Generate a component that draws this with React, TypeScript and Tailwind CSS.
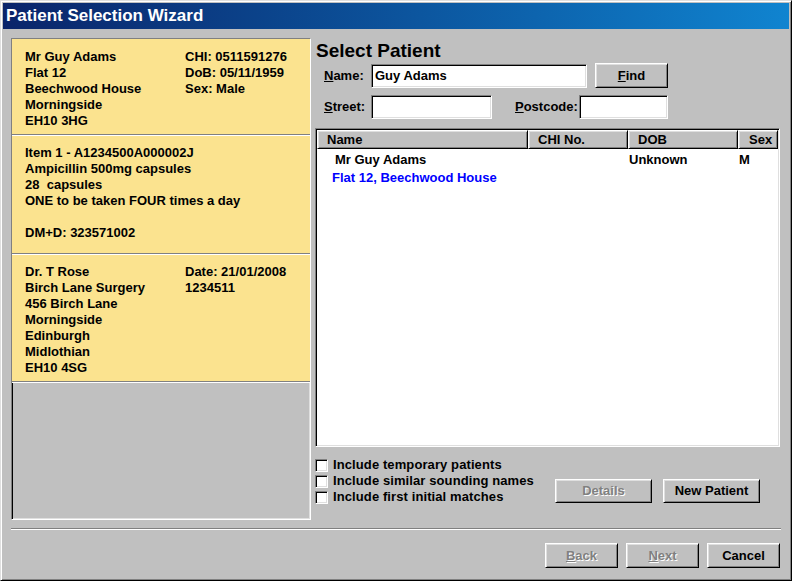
import React from 'react';

// Windows-classic bevel styles
const raised =
  'bg-[#c0c0c0] border border-t-white border-l-white border-r-black border-b-black shadow-[inset_1px_1px_0_#dfdfdf,inset_-1px_-1px_0_#808080]';
const sunken =
  'border border-t-[#808080] border-l-[#808080] border-r-white border-b-white shadow-[inset_1px_1px_0_#000,inset_-1px_-1px_0_#dfdfdf]';

function Btn({ children, className = '', disabled = false }: { children: React.ReactNode; className?: string; disabled?: boolean }) {
  return (
    <div
      className={`${raised} flex items-center justify-center text-[13px] font-bold ${
        disabled ? 'text-[#808080] [text-shadow:1px_1px_0_#fff]' : 'text-black'
      } ${className}`}
    >
      {children}
    </div>
  );
}

function Field({ value = '', className = '' }: { value?: string; className?: string }) {
  return (
    <div className={`${sunken} bg-white flex items-center pl-[3px] text-[13px] font-bold text-black ${className}`}>
      {value}
    </div>
  );
}

function Check({ label }: { label: string }) {
  return (
    <div className="flex items-center h-[16px] gap-[5px]">
      <div className={`${sunken} bg-white w-[13px] h-[13px]`} />
      <span className="text-[13px] font-bold text-black leading-[16px] tracking-[0.1px]">{label}</span>
    </div>
  );
}

function Divider() {
  return (
    <>
      <div className="h-px bg-[#808080]" />
      <div className="h-px bg-white" />
    </>
  );
}

const PATIENT = [
  ['Mr Guy Adams', 'CHI: 0511591276'],
  ['Flat 12', 'DoB: 05/11/1959'],
  ['Beechwood House', 'Sex: Male'],
  ['Morningside', ''],
  ['EH10 3HG', ''],
];

const ITEM = [
  'Item 1 - A1234500A000002J',
  'Ampicillin 500mg capsules',
  '28  capsules',
  'ONE to be taken FOUR times a day',
  '',
  'DM+D: 323571002',
];

const DOCTOR = [
  ['Dr. T Rose', 'Date: 21/01/2008'],
  ['Birch Lane Surgery', '1234511'],
  ['456 Birch Lane', ''],
  ['Morningside', ''],
  ['Edinburgh', ''],
  ['Midlothian', ''],
  ['EH10 4SG', ''],
];

function TwoCol({ rows }: { rows: string[][] }) {
  return (
    <div className="grid grid-cols-[160px_1fr]">
      {rows.map(([a, b], i) => (
        <React.Fragment key={i}>
          <div className="h-[16px] leading-[16px]">{a}</div>
          <div className="h-[16px] leading-[16px]">{b}</div>
        </React.Fragment>
      ))}
    </div>
  );
}

export default function App() {
  return (
    <div className="w-[792px] h-[581px] font-['Liberation_Sans',Arial,sans-serif] bg-[#c0c0c0] border border-t-[#dfdfdf] border-l-[#dfdfdf] border-r-black border-b-black shadow-[inset_1px_1px_0_#fff,inset_-1px_-1px_0_#808080] p-[2px] flex flex-col">
      {/* title bar */}
      <div className="h-[26px] flex items-center pl-[3px] bg-gradient-to-r from-[#0a246a] to-[#1084d0]">
        <span className="text-white font-bold text-[17px]">Patient Selection Wizard</span>
      </div>

      <div className="flex-1 flex flex-col px-[8px] pt-[9px]">
        <div className="flex h-[482px] gap-[4px]">
          {/* left summary panel */}
          <div className={`${sunken} w-[300px] bg-[#c0c0c0] flex flex-col text-[13px] font-bold text-black`}>
            <div className="h-[95px] bg-[#fbe38f] pt-[10px] pl-[13px]">
              <TwoCol rows={PATIENT} />
            </div>
            <Divider />
            <div className="h-[117px] bg-[#fbe38f] pt-[9px] pl-[13px]">
              {ITEM.map((l, i) => (
                <div key={i} className="h-[16px] leading-[16px] whitespace-pre">
                  {l}
                </div>
              ))}
            </div>
            <Divider />
            <div className="h-[126px] bg-[#fbe38f] pt-[9px] pl-[13px]">
              <TwoCol rows={DOCTOR} />
            </div>
            <Divider />
          </div>

          {/* right search side */}
          <div className="flex-1 flex flex-col">
            <div className="h-[24px] leading-[26px] pl-px text-[19px] font-bold text-black">Select Patient</div>

            <div className="flex items-center h-[25px] mt-[1px] pl-[9px]">
              <span className="w-[47px] text-[13px] font-bold">
                <u>N</u>ame:
              </span>
              <Field value="Guy Adams" className="w-[216px] h-[24px]" />
              <Btn className="w-[73px] h-[25px] ml-[8px]">
                <span>
                  <u>F</u>ind
                </span>
              </Btn>
            </div>

            <div className="flex items-center h-[24px] mt-[7px] pl-[9px]">
              <span className="w-[47px] text-[13px] font-bold">
                <u>S</u>treet:
              </span>
              <Field className="w-[121px] h-[24px]" />
              <span className="w-[64px] ml-[23px] text-[13px] font-bold">
                <u>P</u>ostcode:
              </span>
              <Field className="w-[89px] h-[24px]" />
            </div>

            {/* results list */}
            <div className={`${sunken} mt-[9px] w-[465px] h-[319px] bg-white p-px flex flex-col overflow-hidden`}>
              <div className="flex h-[19px] shrink-0 text-[13px] font-bold text-black">
                <div className={`${raised} w-[211px] pl-[9px] leading-[17px]`}>Name</div>
                <div className={`${raised} w-[100px] pl-[9px] leading-[17px]`}>CHI No.</div>
                <div className={`${raised} w-[110px] pl-[9px] leading-[17px]`}>DOB</div>
                <div className={`${raised} w-[40px] pl-[10px] leading-[17px] overflow-hidden`}>Sex</div>
              </div>
              <div className="flex h-[16px] mt-[3px] text-[13px] font-bold text-black leading-[16px]">
                <div className="w-[211px] pl-[18px]">Mr Guy Adams</div>
                <div className="w-[100px]" />
                <div className="w-[110px] pl-px">Unknown</div>
                <div className="w-[40px] pl-px">M</div>
              </div>
              <div className="h-[16px] mt-[2px] pl-[15px] text-[13px] font-bold text-[#0000ff] leading-[16px]">
                Flat 12, Beechwood House
              </div>
            </div>

            <div className="flex mt-[10px]">
              <div className="w-[240px] flex flex-col">
                <Check label="Include temporary patients" />
                <Check label="Include similar sounding names" />
                <Check label="Include first initial matches" />
              </div>
              <div className="flex gap-[11px] mt-[22px]">
                <Btn disabled className="w-[97px] h-[24px]">
                  Details
                </Btn>
                <Btn className="w-[97px] h-[24px]">New Patient</Btn>
              </div>
            </div>
          </div>
        </div>

        <div className="mt-[8px]">
          <Divider />
        </div>

        <div className="flex justify-end gap-[8px] mt-[13px] pr-px">
          <Btn disabled className="w-[73px] h-[25px]">
            <span>
              <u>B</u>ack
            </span>
          </Btn>
          <Btn disabled className="w-[73px] h-[25px]">
            <span>
              <u>N</u>ext
            </span>
          </Btn>
          <Btn className="w-[73px] h-[25px]">Cancel</Btn>
        </div>
      </div>
    </div>
  );
}
